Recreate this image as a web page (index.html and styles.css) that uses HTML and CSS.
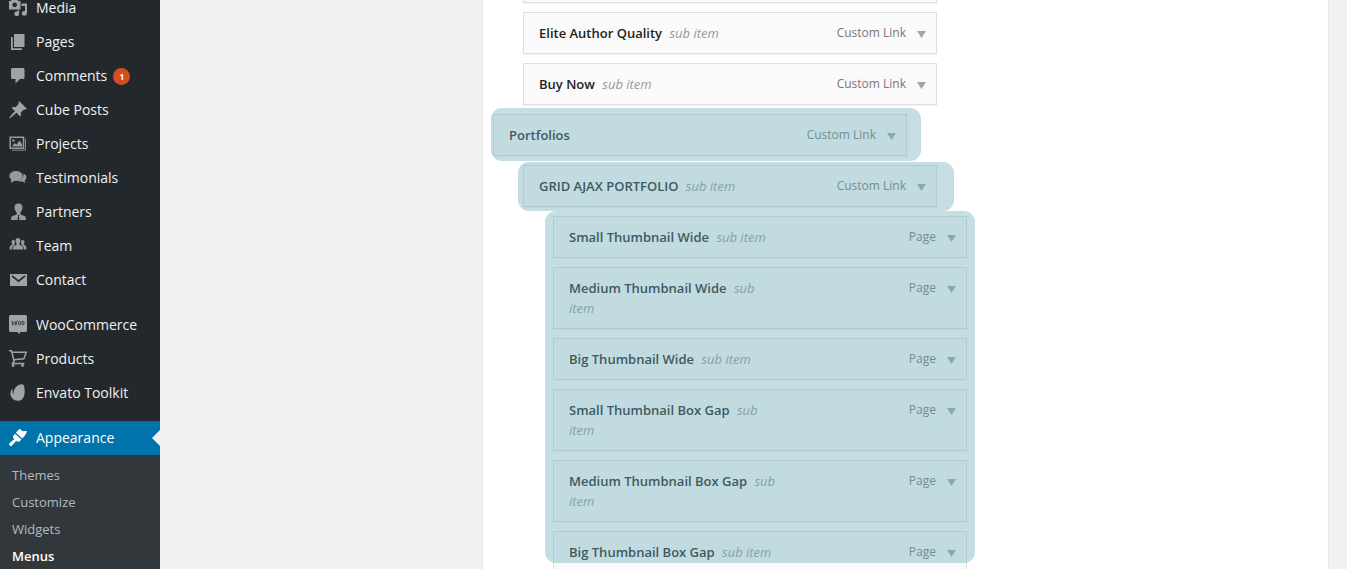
FILE: index.html
```html
<!DOCTYPE html>
<html lang="en">
<head>
<meta charset="utf-8">
<title>Menus</title>
<link rel="stylesheet" href="styles.css">
</head>
<body>
<div class="app">
  <nav class="sidebar">
    <ul class="menu">
      <li class="row"><svg class="icon" viewBox="0 0 20 20"><path fill-rule="evenodd" d="M1 3h2l1-2h5l1 2h2.500v8.500H1zM6.700 4.600a2.300 2.300 0 1 0 .01 0z"/><path d="M13.500 5.500H19v9.800a2.600 2.400 0 1 1-2-2.300V8h-3.500zM9.200 12.500h1.900v3a2.400 2.300 0 1 1-1.900-2z"/></svg><span>Media</span></li>
      <li class="row"><svg class="icon" viewBox="0 0 20 20"><path d="M6 2h10.500v13H6zM3 5h1.800v11.300H14V18H3z"/></svg><span>Pages</span></li>
      <li class="row"><svg class="icon" viewBox="0 0 20 20"><path d="M4.500 2h10.500a1.500 1.500 0 0 1 1.500 1.500v8a1.500 1.500 0 0 1-1.500 1.500H12l-4.500 4.500V13h-3A1.500 1.500 0 0 1 3 11.500v-8A1.500 1.500 0 0 1 4.500 2z"/></svg><span>Comments</span><b class="badge">1</b></li>
      <li class="row"><svg class="icon" viewBox="0 0 20 20"><path d="M11.300 1.200l7.500 7.500-1.300 1-1.500-.3-3.200 3.200c.4 1.800.2 3.200-.5 4l-3.900-3.900C6 15 3 17.700 1 18.600 1.800 16.500 4.500 13.500 7 11.200L3.600 7.700c1-.8 2.400-.9 3.900-.5L10.700 4l-.4-1.500z"/></svg><span>Cube Posts</span></li>
      <li class="row"><svg class="icon plain" viewBox="0 0 20 20"><path fill="none" stroke="#999" stroke-width="1.500" d="M2.200 3.200h13.300v11H2.200z"/><path fill="none" stroke="#888" d="M17.500 4.500v11.700H4"/><path d="M4 12.500l2.500-3.500 2 1.500 3-4 2.700 4v2zM4.200 5.500h2.500v2H4.200z"/></svg><span>Projects</span></li>
      <li class="row"><svg class="icon plain" viewBox="0 0 20 20"><ellipse cx="8" cy="8" rx="6.700" ry="5"/><path d="M3.500 11l-.8 4 4.500-2.500zM15.300 5.400c4 1.500 3.800 5.600 1.200 7.200l1.300 2.500-3.500-1.700c-2.200.4-4.300 0-5.300-.8 4.500-.5 7.200-3.500 6.300-7.200z"/></svg><span>Testimonials</span></li>
      <li class="row"><svg class="icon plain" viewBox="0 0 20 20"><path d="M10.500 1.500c3.200 0 4.300 2.200 3.800 5-.3 2-1.200 3.500-2 4.300v1.700l4.200 1.500c1.300.5 1.500 2 1.500 4H3c0-2 .2-3.500 1.500-4l4.200-1.500v-1.700c-.8-.8-1.700-2.300-2-4.300-.5-2.800.6-5 3.800-5z"/><path fill="#23282d" d="M9.700 13h1.600l-.5 1.700.8 2.300-1.100 1.500L9.400 17l.8-2.300z"/></svg><span>Partners</span></li>
      <li class="row"><svg class="icon plain" viewBox="0 0 20 20"><path d="M10 2c2.200 0 2.700 1.700 2.300 3.500l-.8 2v1.300l2.300 1c1 .4 1.200 1.500 1.200 3.700H5c0-2.200.2-3.300 1.200-3.700l2.300-1V7.500l-.8-2C7.300 3.700 7.800 2 10 2z"/><path d="M5.300 4c1.300 0 1.900.9 1.700 2.400L6.500 8v1L5 10.200c-.7.700-.8 1.800-.8 3.300H1.700c0-2.200 0-3.500.9-3.900l1.500-.7V8l-.6-1.600C3.300 4.900 4 4 5.300 4zM14.700 4c1.300 0 2 .9 1.800 2.400L15.900 8v.9l1.500.7c.9.400 1 1.700 1 3.900h-2.600c0-1.500-.1-2.600-.8-3.300L13.500 9V8L13 6.400c-.2-1.500.4-2.400 1.700-2.400z"/></svg><span>Team</span></li>
      <li class="row"><svg class="icon" viewBox="0 0 20 20"><path d="M2 4h17v12H2z"/><path fill="none" stroke="#23282d" stroke-width="1.700" d="M4 5.800l6.500 5.400L17 5.800"/></svg><span>Contact</span></li>
    </ul>
    <ul class="menu">
      <li class="row"><svg class="icon" viewBox="0 0 20 20"><path d="M2.500 0h15A1.500 1.500 0 0 1 19 1.500v14a1.500 1.500 0 0 1-1.500 1.500H12l-.3 2.200L9 17H2.500A1.500 1.500 0 0 1 1 15.500v-14A1.500 1.500 0 0 1 2.500 0z"/><g fill="none" stroke="#23282d" stroke-width=".8"><path d="M4 5.800l.8 4.400L7 6.600l.9 3.600 1.300-4.700"/><ellipse cx="11.500" cy="8" rx="1.100" ry="1.900"/><ellipse cx="15" cy="8" rx="1.100" ry="1.900"/></g></svg><span>WooCommerce</span></li>
      <li class="row"><svg class="icon" viewBox="0 0 20 20"><path fill="none" stroke="#9ea3a8" stroke-width="1.500" d="M1 1.700h2.500l2.600 10.600L4.500 14.500h12M4 3.200h14.300l-2.500 6.500L5.700 10.800"/><circle cx="5.200" cy="16.500" r="1.400"/><circle cx="14.500" cy="16.500" r="1.400"/></svg><span>Products</span></li>
      <li class="row"><svg class="icon" viewBox="0 0 20 20"><path d="M14.200 1.200c1.800 0 2.900 4.300 2.400 9.200-.4 4.500-2.800 7.300-6.600 7.300-3.300 0-5.500-1.400-6.700-3.700-1.300-2.600-1.200-5.800.4-7.600.6-.6 1-.3.900.5-.2 1.700 0 3.200.8 4.300C5.600 5.500 8.700 1.300 14.200 1.200z"/></svg><span>Envato Toolkit</span></li>
    </ul>
    <ul class="menu">
      <li class="row current"><svg class="icon" viewBox="0 0 20 20"><path d="M7.800 4.800l3-3.200c.7-.7 1.500-.6 2 0l1.500 1.700c1.700-.2 3.400-.3 4.700-.1-.8 2.500-2.700 5.400-4.800 7.400z"/><path d="M6.900 5.700l6.500 5.900-1.900 1.800c-.9.700-1.800.5-2.500 0l-.8-.6c-1.200 1.700-2.800 3.400-4.200 4.700-.8.700-1.700.7-2.400 0-.7-.7-.6-1.700.1-2.400 1.400-1.300 3-2.700 4.600-3.800l-.8-1c-.6-.8-.7-1.700 0-2.500z"/></svg><span>Appearance</span></li>
    </ul>
    <ul class="submenu">
      <li>Themes</li>
      <li>Customize</li>
      <li>Widgets</li>
      <li class="active">Menus</li>
    </ul>
  </nav>
  <main class="content">
    <section class="panel">
      <ul class="items">
        <li class="item depth-1"></li>
        <li class="item depth-1"><div class="title"><b>Elite Author Quality</b> <i>sub item</i></div><div class="type">Custom Link<span class="arrow"></span></div></li>
        <li class="item depth-1"><div class="title"><b>Buy Now</b> <i>sub item</i></div><div class="type">Custom Link<span class="arrow"></span></div></li>
        <li class="item depth-0"><div class="title"><b>Portfolios</b></div><div class="type">Custom Link<span class="arrow"></span></div></li>
        <li class="item depth-1"><div class="title"><b>GRID AJAX PORTFOLIO</b> <i>sub item</i></div><div class="type">Custom Link<span class="arrow"></span></div></li>
        <li class="item depth-2"><div class="title"><b>Small Thumbnail Wide</b> <i>sub item</i></div><div class="type">Page<span class="arrow"></span></div></li>
        <li class="item depth-2"><div class="title"><b>Medium Thumbnail Wide</b> <i>sub<br>item</i></div><div class="type">Page<span class="arrow"></span></div></li>
        <li class="item depth-2"><div class="title"><b>Big Thumbnail Wide</b> <i>sub item</i></div><div class="type">Page<span class="arrow"></span></div></li>
        <li class="item depth-2"><div class="title"><b>Small Thumbnail Box Gap</b> <i>sub<br>item</i></div><div class="type">Page<span class="arrow"></span></div></li>
        <li class="item depth-2"><div class="title"><b>Medium Thumbnail Box Gap</b> <i>sub<br>item</i></div><div class="type">Page<span class="arrow"></span></div></li>
        <li class="item depth-2"><div class="title"><b>Big Thumbnail Box Gap</b> <i>sub item</i></div><div class="type">Page<span class="arrow"></span></div></li>
      </ul>
    </section>
  </main>
  <div class="highlight level-0"></div>
  <div class="highlight level-1"></div>
  <div class="highlight level-2"></div>
</div>
</body>
</html>
```

FILE: styles.css
```css
* { box-sizing: border-box; }
body { margin: 0; overflow: hidden; font-family: "Open Sans", sans-serif; font-size: 13px; }
ul { list-style: none; margin: 0; padding: 0; }

.app { position: relative; display: flex; width: 1347px; height: 569px; overflow: hidden; background: #f1f1f1; }

.sidebar { width: 160px; height: 569px; flex: none; overflow: hidden; background: #23282d; }
.menu { margin-bottom: 11px; }
.menu:first-child { margin-top: -9px; }
.row { display: flex; align-items: center; height: 34px; padding-left: 8px; gap: 8px; font-size: 14px; line-height: 16px; color: #f1f1f1; }
.icon { width: 20px; height: 20px; flex: none; fill: #9ea3a8; }
.icon.plain { fill: #999; }
.badge { width: 17px; height: 17px; margin-left: -2px; border-radius: 50%; background: #d54e21; color: #fff; font-size: 9px; font-weight: 700; line-height: 17px; text-align: center; }
.current { position: relative; background: #0073aa; color: #fff; }
.current .icon { fill: #fff; }
.current::after { content: ""; position: absolute; right: 0; top: 9px; border: 8px solid transparent; border-left-width: 0; border-right-color: #f1f1f1; }
.submenu { height: 140px; margin-top: -11px; padding: 7px 12px; background: #32373c; color: #b4b9be; }
.submenu li { height: 27px; line-height: 27px; }
.submenu .active { color: #fff; font-weight: 600; }

.content { flex: 1; padding: 0 18px 0 322px; }
.panel { height: 569px; overflow: hidden; background: #fff; border: solid #e5e5e5; border-width: 0 1px; }
.items { display: flex; flex-direction: column; gap: 9px; margin-top: -39px; padding-left: 10px; }
.item { display: flex; justify-content: space-between; flex: none; width: 414px; min-height: 42px; padding: 10px 10px 10px 15px; border: 1px solid #dfdfdf; background: #fafafa; box-shadow: 0 1px 1px rgba(0, 0, 0, .04); line-height: 20px; }
.depth-1 { margin-left: 30px; }
.depth-2 { margin-left: 60px; }
.title { white-space: nowrap; color: #999; }
.title b { color: #222; font-weight: 600; }
.title i { margin-left: 4px; }
.type { display: flex; height: 20px; gap: 11px; font-size: 12px; color: #777; }
.arrow { width: 9px; height: 7px; margin-top: 8px; background: #a0a5aa; clip-path: polygon(0 0, 100% 0, 50% 100%); }

.highlight { position: absolute; border-radius: 11px; background: rgba(107, 172, 188, .4); }
.level-0 { left: 491px; top: 108px; width: 429.5px; height: 52.5px; }
.level-1 { left: 517.5px; top: 162px; width: 436.5px; height: 49px; }
.level-2 { left: 544.5px; top: 211px; width: 430.5px; height: 352px; }
```
